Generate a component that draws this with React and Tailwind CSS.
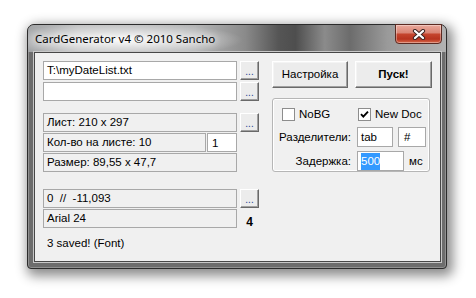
import React from 'react';

const ui = "font-['Liberation_Sans',Arial,sans-serif] text-[11.5px] text-black";

function TextBox({ className = '', children }) {
    return (
        <div className={`flex items-center h-[19px] shrink-0 bg-white border border-[#a8a8a8] pl-[3px] whitespace-pre ${className}`}>
            {children}
        </div>
    );
}

function StaticBox({ className = '', children }) {
    return (
        <div className={`flex items-center h-[19px] shrink-0 bg-[#f0f0f0] border border-[#a8a8a8] pl-[3px] whitespace-pre ${className}`}>
            {children}
        </div>
    );
}

function DotsButton() {
    return (
        <div className="w-[19px] h-[19px] shrink-0 flex justify-center pt-[5px] bg-[#ececec] border border-t-white border-l-white border-r-[#696969] border-b-[#696969] shadow-[inset_-1px_-1px_0_#a0a0a0] text-[10px] leading-none text-[#1d3f93]">
            ...
        </div>
    );
}

function PushButton({ className = '', children }) {
    return (
        <div className={`h-[27px] flex items-center justify-center bg-[#ececec] border border-t-white border-l-white border-r-[#696969] border-b-[#696969] shadow-[inset_-1px_-1px_0_#a0a0a0,inset_1px_1px_0_#f4f4f4] ${className}`}>
            {children}
        </div>
    );
}

function CheckBox({ checked, label, className = '' }) {
    return (
        <div className={`flex items-center gap-[4px] ${className}`}>
            <div className="w-[13px] h-[13px] bg-white border border-[#8d8d8d] flex items-center justify-center">
                {checked && (
                    <svg width="11" height="11" viewBox="0 0 11 11">
                        <path d="M2 5.2 L4.3 7.6 L9 2.6" fill="none" stroke="#000" strokeWidth="1.9" />
                    </svg>
                )}
            </div>
            <span>{label}</span>
        </div>
    );
}

export default function App() {
    return (
        <div className="w-[476px] h-[298px] bg-white pt-[24px] pl-[27px] overflow-hidden">
            {/* window */}
            <div className="w-[420px] h-[245px] flex flex-col rounded-t-[7px] rounded-b-[4px] border border-[#2c2c2c] bg-[#6d6d6d] shadow-[3px_4px_12px_3px_rgba(0,0,0,0.45),inset_0_0_0_1px_rgba(255,255,255,0.25)]">
                {/* title bar */}
                <div className="h-[27px] shrink-0 flex items-start rounded-t-[6px] bg-[radial-gradient(ellipse_120px_17px_at_95px_55%,rgba(255,255,255,0.95),rgba(255,255,255,0)),linear-gradient(90deg,#a3a5a7_0%,#bebfc0_12%,#b4b5b6_40%,#8a8a8a_52%,#555555_60%,#4e4e4e_64%,#8b8b8b_71%,#6c6c6c_77%,#9a9a9a_86%,#b2b2b2_100%)]">
                    <span className="self-center pl-[7px] font-['Noto_Sans',sans-serif] text-[11.5px] text-black [text-shadow:0_0_6px_#fff,0_0_10px_#fff]">
                        CardGenerator v4 © 2010 Sancho
                    </span>
                    <div className="ml-auto mr-[4px] -mt-[1px] w-[47px] h-[20px] flex items-center justify-center rounded-b-[4px] border border-[#5b2a22] bg-[linear-gradient(180deg,#eaa99c_0%,#da8676_42%,#c4442d_52%,#b7341f_78%,#d8694b_100%)] shadow-[inset_0_0_0_1px_rgba(255,255,255,0.35)]">
                        <svg width="14" height="11" viewBox="0 0 14 11">
                            <path d="M3 2 L11 9 M11 2 L3 9" stroke="#3a2422" strokeWidth="4.2" strokeLinecap="round" />
                            <path d="M3 2 L11 9 M11 2 L3 9" stroke="#ffffff" strokeWidth="2.3" strokeLinecap="round" />
                        </svg>
                    </div>
                </div>

                {/* client area */}
                <div className={`flex-1 ml-[6px] mr-[5px] mb-[6px] flex pl-[8px] pt-[8px] bg-[#f0f0f0] border border-[#474747] shadow-[0_0_0_1px_#c8c8c8] ${ui}`}>
                    {/* left column */}
                    <div className="w-[216px] flex flex-col">
                        <div className="flex gap-[3px]">
                            <TextBox className="w-[194px]">{"T:\\myDateList.txt"}</TextBox>
                            <DotsButton />
                        </div>
                        <div className="flex gap-[3px] mt-[2px]">
                            <TextBox className="w-[194px]" />
                            <DotsButton />
                        </div>

                        <div className="flex gap-[3px] mt-[12px]">
                            <StaticBox className="w-[194px]">Лист: 210 x 297</StaticBox>
                            <DotsButton />
                        </div>
                        <div className="flex gap-[1px] mt-[1px]">
                            <StaticBox className="w-[163px]">Кол-во на листе: 10</StaticBox>
                            <TextBox className="w-[30px] pl-[4px] pt-[2px]">1</TextBox>
                        </div>
                        <StaticBox className="w-[194px] mt-[1px]">Размер: 89,55 x 47,7</StaticBox>

                        <div className="flex gap-[3px] mt-[17px]">
                            <StaticBox className="w-[194px]">{"0  //  -11,093"}</StaticBox>
                            <DotsButton />
                        </div>
                        <div className="flex gap-[3px] mt-[1px]">
                            <StaticBox className="w-[194px]">Arial 24</StaticBox>
                            <div className="w-[19px] flex items-center justify-center pt-[4px] font-bold text-[12px]">4</div>
                        </div>
                        <div className="pl-[4px] mt-[4px]">3 saved! (Font)</div>
                    </div>

                    {/* right column */}
                    <div className="ml-[13px] w-[160px] flex flex-col">
                        <div className="flex gap-[7px]">
                            <PushButton className="w-[76px]">Настройка</PushButton>
                            <PushButton className="w-[77px] font-bold">Пуск!</PushButton>
                        </div>
                        <div className="mt-[10px] w-[158px] h-[74px] flex flex-col rounded-[3px] border border-[#b6b6b6] shadow-[inset_0_0_0_1px_#fff]">
                            <div className="flex pt-[7px] pl-[9px]">
                                <CheckBox className="w-[76px]" label="NoBG" />
                                <CheckBox checked label="New Doc" />
                            </div>
                            <div className="flex items-center mt-[4px]">
                                <span className="w-[78px] text-right">Разделители:</span>
                                <TextBox className="ml-[6px] w-[36px] h-[20px]">tab</TextBox>
                                <TextBox className="ml-[5px] w-[28px] h-[20px] pl-[5px]">#</TextBox>
                            </div>
                            <div className="flex items-center mt-[4px]">
                                <span className="w-[78px] text-right">Задержка:</span>
                                <TextBox className="ml-[6px] w-[47px] h-[20px]">
                                    <span className="bg-[#3399ff] text-white">500</span>
                                </TextBox>
                                <span className="ml-[5px]">мс</span>
                            </div>
                        </div>
                    </div>
                </div>
            </div>
        </div>
    );
}
